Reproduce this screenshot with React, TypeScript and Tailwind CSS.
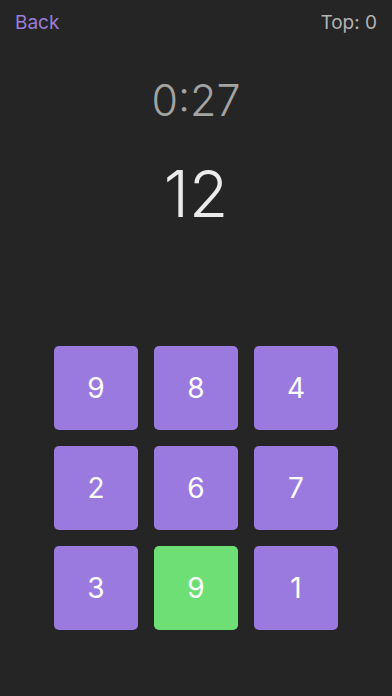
export default function App() {
    const tiles = [
        { n: 9 }, { n: 8 }, { n: 4 },
        { n: 2 }, { n: 6 }, { n: 7 },
        { n: 3 }, { n: 9, hit: true }, { n: 1 },
    ]

    return (
        <div className="w-[392px] h-[696px] bg-[#252525] flex flex-col font-['Inter',sans-serif] overflow-hidden">
            {/* Header */}
            <div className="flex justify-between items-center px-[15px] pt-[10px] h-[36px]">
                <span className="text-[19px] text-[#9b7ddc]">Back</span>
                <span className="text-[19px] text-[#b3b3b3]">Top: 0</span>
            </div>

            {/* Timer */}
            <div className="mt-[40px] text-center text-[43px] font-light leading-[48px] text-[#a3a3a3]">0:27</div>

            {/* Score */}
            <div className="mt-[34px] text-center text-[64px] font-light leading-[72px] text-[#ebebeb]">12</div>

            {/* Grid */}
            <div className="mt-[116px] grid grid-cols-[84px_84px_84px] gap-x-[16px] gap-y-[16px] justify-center">
                {tiles.map((t, i) => (
                    <div
                        key={i}
                        className={`w-[84px] h-[84px] rounded-[5px] flex items-center justify-center text-[28px] text-white ${t.hit ? 'bg-[#6ddf75]' : 'bg-[#9b7ae0]'}`}
                    >
                        {t.n}
                    </div>
                ))}
            </div>
        </div>
    )
}
